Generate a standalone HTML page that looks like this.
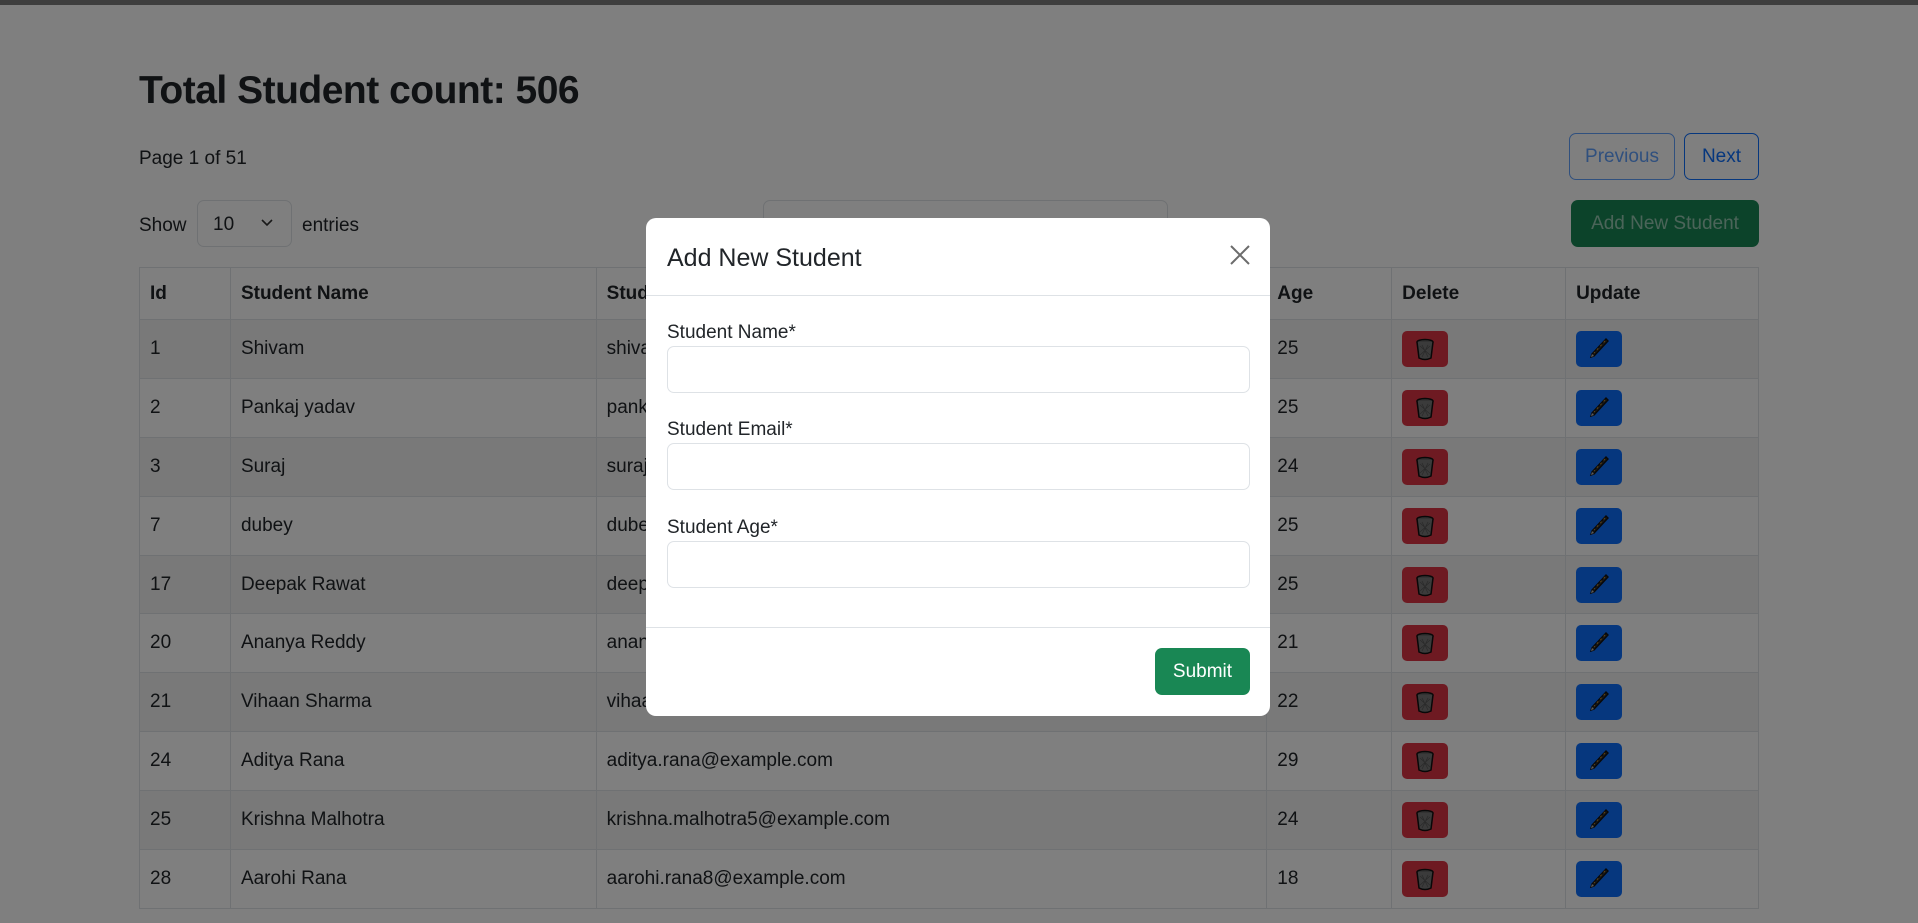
<!DOCTYPE html>
<html><head><meta charset="utf-8"><style>
*{box-sizing:border-box;margin:0;padding:0}
body{width:1918px;height:923px;overflow:hidden;background:#fff;font-family:"Liberation Sans",sans-serif;color:#212529;font-size:20px;position:relative}
.abs{position:absolute}
h2{position:absolute;left:139px;top:69px;font-size:39px;font-weight:600;letter-spacing:-0.5px}
.btn{position:absolute;border-radius:7px;display:flex;align-items:center;justify-content:center;font-size:19px}
table{position:absolute;left:139px;top:267px;width:1620px;border-collapse:collapse;font-size:19px}
td,th{border:1px solid #dee2e6;padding:0 10px;text-align:left;height:58.9px}
th{height:52px;font-weight:bold}
tbody tr:nth-child(odd) td{background:#f2f2f2}
.ib{width:46px;height:36px;border-radius:5px;display:flex;align-items:center;justify-content:center}
.overlay{position:absolute;left:0;top:0;width:1918px;height:923px;background:rgba(0,0,0,.5)}
.modal{position:absolute;left:646px;top:218px;width:624px;height:498px;background:#fff;border-radius:10px}
.lbl{position:absolute;left:21px;font-size:19px;color:#212529}
.inp{position:absolute;left:21px;width:583px;height:47px;border:1px solid #dee2e6;border-radius:7px}
</style></head><body>
<h2>Total Student count: 506</h2>
<div class="abs" style="left:139px;top:148px;font-size:19px">Page 1 of 51</div>
<div class="btn" style="left:1569px;top:133px;width:106px;height:47px;border:1px solid #0d6efd;color:#0d6efd;opacity:.65">Previous</div>
<div class="btn" style="left:1684px;top:133px;width:75px;height:47px;border:1px solid #0d6efd;color:#0d6efd">Next</div>
<div class="abs" style="left:139px;top:215px;font-size:19px">Show</div>
<div class="abs" style="left:197px;top:200px;width:95px;height:47px;border:1px solid #dee2e6;border-radius:7px;font-size:19px;padding:13px 0 0 15px">10<svg class="abs" style="left:62px;top:17px" width="14" height="10" viewBox="0 0 14 10"><path d="M2 2l5 5 5-5" stroke="#333" stroke-width="1.6" fill="none"/></svg></div>
<div class="abs" style="left:302px;top:215px;font-size:19px">entries</div>
<div class="abs" style="left:763px;top:200px;width:405px;height:47px;border:1px solid #dee2e6;border-radius:7px"></div>
<div class="btn" style="left:1571px;top:200px;width:188px;height:47px;background:#198754;color:#fff"><span style="opacity:.55">Add New Student</span></div>
<table>
<colgroup><col style="width:91px"><col style="width:366px"><col style="width:671px"><col style="width:125px"><col style="width:174px"><col style="width:193px"></colgroup>
<thead><tr><th>Id</th><th>Student Name</th><th>Student Email</th><th>Age</th><th>Delete</th><th>Update</th></tr></thead>
<tbody id="tb"></tbody></table>
<div class="overlay"></div>
<div class="abs" style="left:0;top:0;width:1918px;height:5px;background:#3e3e3e"></div>
<div class="modal">
<div class="abs" style="left:21px;top:26px;font-size:25px;color:#212529">Add New Student</div>
<svg class="abs" style="left:583px;top:26px" width="22" height="22" viewBox="0 0 22 22"><path d="M2 2L20 20M20 2L2 20" stroke="#6c6c6c" stroke-width="2"/></svg>
<div class="abs" style="left:0;top:77px;width:624px;height:1px;background:#dee2e6"></div>
<div class="lbl" style="top:104px">Student Name*</div><div class="inp" style="top:128px"></div>
<div class="lbl" style="top:201px">Student Email*</div><div class="inp" style="top:225px"></div>
<div class="lbl" style="top:299px">Student Age*</div><div class="inp" style="top:323px"></div>
<div class="abs" style="left:0;top:409px;width:624px;height:1px;background:#dee2e6"></div>
<div class="btn" style="left:509px;top:430px;width:95px;height:47px;background:#198754;color:#fff">Submit</div>
</div>
<script>
var d=[[1,"Shivam","shivam@example.com",25],[2,"Pankaj yadav","pankaj@example.com",25],[3,"Suraj","suraj@example.com",24],[7,"dubey","dubey@example.com",25],[17,"Deepak Rawat","deepak@example.com",25],[20,"Ananya Reddy","ananya@example.com",21],[21,"Vihaan Sharma","vihaan@example.com",22],[24,"Aditya Rana","aditya.rana@example.com",29],[25,"Krishna Malhotra","krishna.malhotra5@example.com",24],[28,"Aarohi Rana","aarohi.rana8@example.com",18]];
var trash='<svg width="22" height="24" viewBox="0 0 22 24"><ellipse cx="11" cy="5" rx="8" ry="2.5" fill="#666" stroke="#111" stroke-width="1.5"/><path d="M3 5l2 16q6 3 12 0l2-16" fill="#777" stroke="#111" stroke-width="1.5"/><path d="M6 9l10 9M16 9L6 18M8 8l6 12M14 8L8 20" stroke="#555" stroke-width=".8"/></svg>';
var pen='<svg width="24" height="26" viewBox="0 0 24 26"><path d="M19 3l2 2L7 20l-3 1 1-3z" fill="#333" stroke="#111" stroke-width="1.4"/><path d="M18 5L7 17" stroke="#c08a2a" stroke-width="1" stroke-dasharray="2 3"/><path d="M4 21l1-3 2 2z" fill="#bbb"/></svg>';
var h="";d.forEach(function(r){h+='<tr><td>'+r[0]+'</td><td>'+r[1]+'</td><td>'+r[2]+'</td><td>'+r[3]+'</td><td><div class="ib" style="background:#dc3545">'+trash+'</div></td><td><div class="ib" style="background:#0d6efd">'+pen+'</div></td></tr>';});
document.getElementById("tb").innerHTML=h;
</script>
</body></html>
